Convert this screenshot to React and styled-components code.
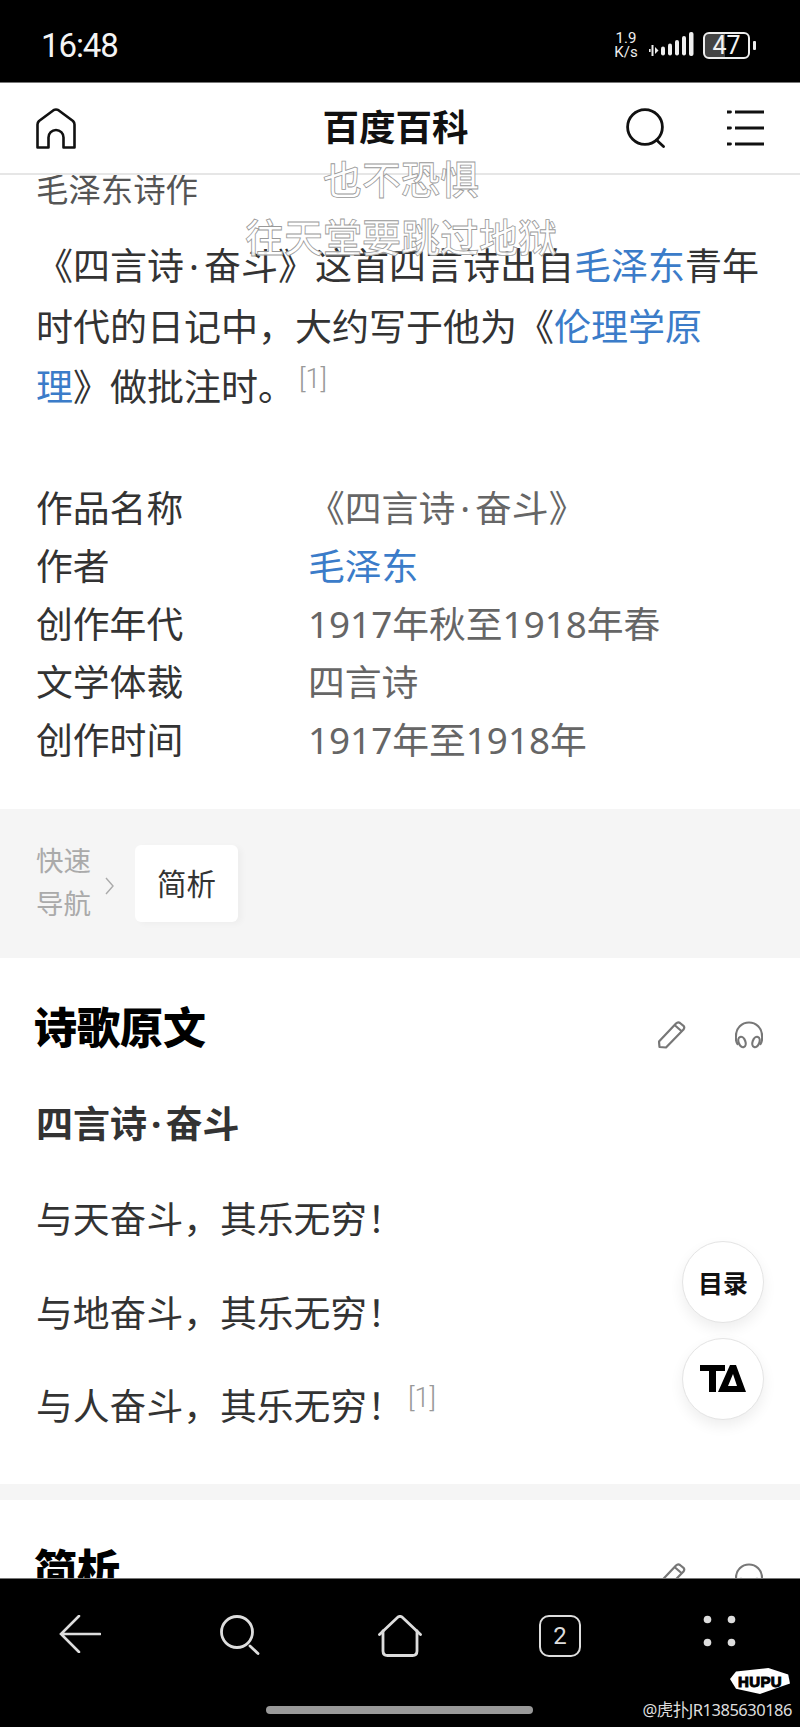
import React from "react";
import styled, { createGlobalStyle } from "styled-components";

const GlobalStyle = createGlobalStyle`
    html, body {
        margin: 0;
        padding: 0;
        background: #000;
    }

    body {
        font-family: "Noto Sans", "Noto Sans CJK SC", sans-serif;
    }
`

const Screen = styled.div`
    position: relative;
    width: 800px;
    height: 1727px;
    overflow: hidden;
    display: flex;
    flex-direction: column;
    background-color: #fff;
`

const StatusBar = styled.div`
    height: 83px;
    flex-shrink: 0;
    padding: 8px 44px 0 41px;
    box-sizing: border-box;
    display: flex;
    align-items: center;
    justify-content: space-between;
    background-color: #000;
    color: #fff;
    border-bottom: 1px solid #777;
`

const Clock = styled.div`
    font-family: "Roboto", sans-serif;
    font-size: 33px;
    letter-spacing: -1.1px;
    color: #f4f4f4;
`

const StatusRight = styled.div`
    display: flex;
    align-items: center;
`

const Speed = styled.div`
    width: 30px;
    font-family: "Roboto", sans-serif;
    font-size: 15px;
    line-height: 14px;
    text-align: center;
    color: #eee;
`

const SpeedGap = styled.div`
    width: 8px;
`

const Battery = styled.div`
    margin-left: 9px;
    width: 47px;
    height: 27px;
    box-sizing: border-box;
    border: 2px solid #eee;
    border-radius: 6px;
    display: flex;
    align-items: center;
    justify-content: center;
    font-family: "Roboto", sans-serif;
    font-size: 25px;
    color: #f2f2f2;
    background: linear-gradient(90deg, #444 0 47%, #000 47%);
`

const BatteryTip = styled.div`
    margin-left: 3px;
    width: 3px;
    height: 9px;
    border-radius: 1px;
    background-color: #eee;
`

const Header = styled.header`
    height: 92px;
    flex-shrink: 0;
    padding: 0 36px;
    box-sizing: border-box;
    display: grid;
    grid-template-columns: 1fr auto 1fr;
    align-items: center;
    background-color: #fff;
    border-bottom: 2px solid #e6e6e6;
`

const HeaderTitle = styled.div`
    font-size: 36.5px;
    font-weight: 700;
    color: #111;
    line-height: 1;
    margin: -2px 0 0 -9px;
`

const HeaderActions = styled.div`
    display: flex;
    justify-content: flex-end;
    align-items: center;
    gap: 61px;
`

const Content = styled.main`
    flex: 1;
    min-height: 0;
    overflow: hidden;
`

const Summary = styled.section`
    padding: 0 36px;
    height: 634px;
    box-sizing: border-box;
    display: flow-root;
`

const Kicker = styled.div`
    font-size: 32.4px;
    line-height: 32px;
    margin-top: -2px;
    color: #555;
`

const Paragraph = styled.p`
    margin: 31px 0 0;
    font-size: 37px;
    line-height: 60.5px;
    color: #333;
`

const Dot = styled.span`
    margin: 0 ${(props) => props.$gap || 5}px;
`

const KeepTogether = styled.span`
    white-space: nowrap;
`

const Link = styled.a`
    color: #3b7cc9;
    text-decoration: none;
`

const Sup = styled.sup`
    font-size: 27px;
    font-family: "Roboto", sans-serif;
    font-weight: 300;
    line-height: 0;
    vertical-align: 13px;
    margin-left: 4px;
    color: #999;
`

const InfoList = styled.div`
    margin-top: 61px;
`

const InfoRow = styled.div`
    display: grid;
    grid-template-columns: 272px 1fr;
    font-size: 36.8px;
    line-height: 58.2px;
`

const InfoLabel = styled.div`
    color: #333;
`

const InfoValue = styled.div`
    color: ${(props) => (props.$link ? "#3b7cc9" : "#666")};
`

const QuickNav = styled.nav`
    height: 149px;
    box-sizing: border-box;
    padding: 0 36px;
    display: flex;
    align-items: center;
    background-color: #f5f5f5;
`

const QuickLabel = styled.div`
    width: 56px;
    font-size: 27.5px;
    line-height: 43px;
    margin-top: -3px;
    color: #aaa;
`

const QuickArrow = styled.div`
    margin: 4px 21px 0 13px;
    display: flex;
`

const QuickCard = styled.div`
    width: 103px;
    height: 77px;
    padding-bottom: 3px;
    box-sizing: border-box;
    display: flex;
    align-items: center;
    justify-content: center;
    border-radius: 6px;
    background-color: #fff;
    box-shadow: 4px 2px 6px rgba(0, 0, 0, .03);
    font-size: 29.5px;
    color: #333;
`

const Section = styled.section`
    padding: 40px 36px 0;
    height: 542px;
    box-sizing: border-box;
    border-bottom: 16px solid #f5f5f5;
`

const SectionHead = styled.div`
    display: flex;
    align-items: center;
    justify-content: space-between;
    height: 60px;
    margin: 0 1px 0 -2px;
`

const SectionTitle = styled.h2`
    margin: 0;
    font-size: 43px;
    font-weight: 900;
    line-height: 60px;
    color: #000;
`

const SectionTools = styled.div`
    display: flex;
    align-items: center;
    gap: 49px;
    margin-top: 14px;
`

const PoemTitle = styled.div`
    margin-top: 41px;
    font-size: 37px;
    font-weight: 700;
    line-height: 50px;
    color: #333;
`

const PoemLine = styled.p`
    margin: 0;
    font-size: 36.8px;
    line-height: 93.5px;
    color: #333;
`

const PoemBody = styled.div`
    margin-top: 24px;
`

const SecondSection = styled.section`
    padding: 40px 36px 0;
`

const BottomBar = styled.footer`
    position: relative;
    height: 149px;
    flex-shrink: 0;
    box-sizing: border-box;
    padding-top: 36px;
    display: grid;
    grid-template-columns: repeat(5, 160px);
    justify-items: center;
    align-items: start;
    background-color: #000;
    border-top: 1px solid #777;
`

const TabCount = styled.div`
    width: 42px;
    height: 42px;
    box-sizing: border-box;
    border: 2.5px solid #ddd;
    border-radius: 10px;
    display: flex;
    align-items: center;
    justify-content: center;
    font-family: "Roboto", sans-serif;
    font-size: 24px;
    color: #ddd;
`

const Pill = styled.div`
    position: absolute;
    left: 266px;
    top: 127px;
    width: 267px;
    height: 8px;
    border-radius: 4px;
    background-color: #999;
`

const Watermark = styled.div`
    position: absolute;
    right: 8px;
    top: 120px;
    font-size: 16.5px;
    line-height: 22px;
    color: #ddd;
    white-space: nowrap;
    letter-spacing: -0.5px;
`

const HupuBadge = styled.div`
    position: absolute;
    left: 730px;
    top: 89px;
    width: 60px;
    height: 26px;
    display: flex;
    align-items: center;
    justify-content: center;
    background-color: #fff;
    clip-path: polygon(0 42%, 10% 13%, 64% 0, 97% 25%, 100% 60%, 50% 100%, 10% 80%);
    font-family: "Liberation Sans", sans-serif;
    font-size: 15px;
    font-weight: 700;
    color: #000;
    -webkit-text-stroke: 1px #000;
    letter-spacing: 0.4px;
`

const Fab = styled.div`
    position: absolute;
    left: 682px;
    top: ${(props) => props.$top}px;
    width: 82px;
    height: 82px;
    box-sizing: border-box;
    border: 1px solid #e4e4e4;
    border-radius: 50%;
    background-color: #fff;
    box-shadow: 0 6px 14px rgba(0, 0, 0, .07);
    display: flex;
    align-items: center;
    justify-content: center;
    font-size: 25px;
    font-weight: 700;
    color: #111;
`

const Caption = styled.div`
    position: absolute;
    left: 0;
    right: 0;
    top: ${(props) => props.$top}px;
    padding-left: ${(props) => props.$shift}px;
    text-align: center;
    font-size: 39px;
    font-weight: 500;
    line-height: 44px;
    color: rgba(255, 255, 255, .93);
    -webkit-text-stroke: 0.8px #999;
`

function HomeIcon() {
    return (
        <svg width="40" height="41" viewBox="0 0 40 41" fill="none" stroke="#111" strokeWidth="2.6" strokeLinejoin="round">
            <path d="M1.5 39.5V16.5Q1.5 14.5 3 13L17.5 2.2Q20 0.8 22.5 2.2L37 13Q38.5 14.5 38.5 16.5V39.5H27.5V29.5A7.5 7.5 0 0 0 12.5 29.5V39.5Z" />
        </svg>
    );
}

function SearchIcon() {
    return (
        <svg width="40" height="40" viewBox="0 0 40 40" fill="none" stroke="#111" strokeWidth="2.8" strokeLinecap="round">
            <circle cx="19" cy="19" r="17.4" />
            <path d="M30.5 32L37.5 38.5" />
        </svg>
    );
}

function MenuIcon() {
    return (
        <svg width="37" height="36" viewBox="0 0 37 36" fill="none" stroke="#111" strokeWidth="2.8">
            <path d="M8 2H37M8 18H37M8 34H37" />
            <path d="M0 2H3.5M0 18H3.5M0 34H3.5" strokeLinecap="round" />
        </svg>
    );
}

function SignalIcon() {
    return (
        <svg width="45" height="26" viewBox="0 0 45 26" fill="#eee">
            <rect x="0" y="17" width="1.6" height="3" />
            <rect x="2.5" y="13" width="2" height="11" />
            <path d="M6 15L9.5 18.5L6 22Z" />
            <rect x="12" y="14.5" width="4" height="9" rx="2" />
            <rect x="19" y="11.5" width="4" height="12" rx="2" />
            <rect x="26" y="8" width="4" height="15.5" rx="2" />
            <rect x="33" y="4" width="4" height="19.5" rx="2" />
            <rect x="40" y="0" width="4.5" height="24" rx="2" />
        </svg>
    );
}

function PencilIcon() {
    return (
        <svg width="28" height="28" viewBox="0 0 28 28" fill="none" stroke="#777" strokeWidth="2.2" strokeLinejoin="round">
            <path d="M1.5 26L1 20.5L18 2.5Q20 0.5 22 2L25.5 4.8Q27 6.5 25.5 8.5L8 26.5Z" />
            <path d="M16.5 4L24 10.5" />
        </svg>
    );
}

function HeadphonesIcon() {
    return (
        <svg width="28" height="28" viewBox="0 0 28 28" fill="none" stroke="#777" strokeWidth="2.2" strokeLinecap="round">
            <path d="M2.5 23A13 13 0 0 1 1 14.5A13 13 0 0 1 27 14.5A13 13 0 0 1 25.5 23" />
            <ellipse cx="7" cy="21" rx="3.4" ry="5.4" transform="rotate(-20 7 21)" />
            <ellipse cx="21" cy="21" rx="3.4" ry="5.4" transform="rotate(20 21 21)" />
        </svg>
    );
}

function ChevronIcon() {
    return (
        <svg width="9" height="18" viewBox="0 0 9 18" fill="none" stroke="#aaa" strokeWidth="1.4">
            <path d="M1 1L8 9L1 17" />
        </svg>
    );
}

function TaIcon() {
    return (
        <svg width="46" height="28" viewBox="0 0 46 28" fill="#000">
            <path d="M0 0H25V6H16V27H9V6H0Z" />
            <path d="M30 0H36L46 27H21L23.5 21H37L33 9L25.5 27H18Z" />
        </svg>
    );
}

function BackIcon() {
    return (
        <svg width="42" height="38" viewBox="0 0 42 38" fill="none" stroke="#ddd" strokeWidth="2.6" strokeLinecap="round">
            <path d="M20 1L2 19L20 37M2 19H41" />
        </svg>
    );
}

function BottomSearchIcon() {
    return (
        <svg width="40" height="40" viewBox="0 0 40 40" fill="none" stroke="#ddd" strokeWidth="2.8" strokeLinecap="round">
            <circle cx="17" cy="17" r="15.5" />
            <path d="M30 31L38 38.5" />
        </svg>
    );
}

function BottomHomeIcon() {
    return (
        <svg width="44" height="42" viewBox="0 0 44 42" fill="none" stroke="#ddd" strokeWidth="2.8" strokeLinecap="round" strokeLinejoin="round">
            <path d="M1.5 19.5L20 2Q22 0.8 24 2L42.5 19.5" />
            <path d="M5 16V36Q5 40.5 9.5 40.5H34.5Q39 40.5 39 36V16" />
        </svg>
    );
}

function DotsIcon() {
    return (
        <svg width="34" height="32" viewBox="0 0 34 32" fill="#ddd">
            <circle cx="4.5" cy="4.5" r="3.8" />
            <circle cx="28.5" cy="4.5" r="3.8" />
            <circle cx="4.5" cy="27.5" r="3.8" />
            <circle cx="28.5" cy="27.5" r="3.8" />
        </svg>
    );
}

const infoRows = [
    { label: "作品名称", value: <>《四言诗<Dot>·</Dot>奋斗》</> },
    { label: "作者", value: "毛泽东", link: true },
    { label: "创作年代", value: "1917年秋至1918年春" },
    { label: "文学体裁", value: "四言诗" },
    { label: "创作时间", value: "1917年至1918年" },
];

export default function App() {
    return (
        <>
            <GlobalStyle />
            <Screen>
                <StatusBar>
                    <Clock>16:48</Clock>
                    <StatusRight>
                        <Speed>1.9<br />K/s</Speed>
                        <SpeedGap />
                        <SignalIcon />
                        <Battery>47</Battery>
                        <BatteryTip />
                    </StatusRight>
                </StatusBar>
                <Header>
                    <HomeIcon />
                    <HeaderTitle>百度百科</HeaderTitle>
                    <HeaderActions>
                        <SearchIcon />
                        <MenuIcon />
                    </HeaderActions>
                </Header>
                <Content>
                    <Summary>
                        <Kicker>毛泽东诗作</Kicker>
                        <Paragraph>
                            《四言诗<Dot>·</Dot>奋斗》这首四言诗出自<Link href="#">毛泽东</Link>青年时代的日记中，大约写于他为《<Link href="#">伦理学原</Link><KeepTogether><Link href="#">理</Link>》</KeepTogether>做批注时。<Sup>[1]</Sup>
                        </Paragraph>
                        <InfoList>
                            {infoRows.map((row) => (
                                <InfoRow key={row.label}>
                                    <InfoLabel>{row.label}</InfoLabel>
                                    <InfoValue $link={row.link}>{row.value}</InfoValue>
                                </InfoRow>
                            ))}
                        </InfoList>
                    </Summary>
                    <QuickNav>
                        <QuickLabel>快速导航</QuickLabel>
                        <QuickArrow><ChevronIcon /></QuickArrow>
                        <QuickCard>简析</QuickCard>
                    </QuickNav>
                    <Section>
                        <SectionHead>
                            <SectionTitle>诗歌原文</SectionTitle>
                            <SectionTools>
                                <PencilIcon />
                                <HeadphonesIcon />
                            </SectionTools>
                        </SectionHead>
                        <PoemTitle>四言诗<Dot $gap={4}>·</Dot>奋斗</PoemTitle>
                        <PoemBody>
                            <PoemLine>与天奋斗，其乐无穷！</PoemLine>
                            <PoemLine>与地奋斗，其乐无穷！</PoemLine>
                            <PoemLine>与人奋斗，其乐无穷！<Sup>[1]</Sup></PoemLine>
                        </PoemBody>
                    </Section>
                    <SecondSection>
                        <SectionHead>
                            <SectionTitle>简析</SectionTitle>
                            <SectionTools>
                                <PencilIcon />
                                <HeadphonesIcon />
                            </SectionTools>
                        </SectionHead>
                    </SecondSection>
                </Content>
                <BottomBar>
                    <BackIcon />
                    <BottomSearchIcon />
                    <BottomHomeIcon />
                    <TabCount>2</TabCount>
                    <DotsIcon />
                    <HupuBadge>HUPU</HupuBadge>
                    <Pill />
                    <Watermark>@虎扑JR1385630186</Watermark>
                </BottomBar>
                <Caption $top={157} $shift={2}>也不恐惧</Caption>
                <Caption $top={215} $shift={2}>往天堂要跳过地狱</Caption>
                <Fab $top={1241}>目录</Fab>
                <Fab $top={1338}><TaIcon /></Fab>
            </Screen>
        </>
    );
}
